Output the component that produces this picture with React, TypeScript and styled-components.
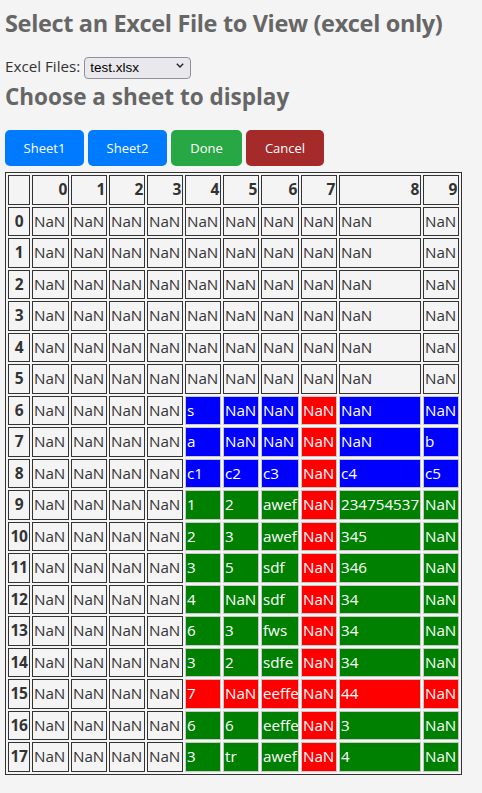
import React from "react";
import styled, { createGlobalStyle } from "styled-components";

const Global = createGlobalStyle`
  html, body { margin: 0; padding: 0; background: #f4f4f4; }
  body { font-family: "Open Sans", "Noto Sans", sans-serif; color: #333; }
`;

const Page = styled.div`
  padding: 0 5px 16px;
  display: flex;
  flex-direction: column;
  align-items: flex-start;
`;

const Title = styled.h1`
  margin: 7px 0 0;
  font-size: 23.5px;
  letter-spacing: -0.35px;
  line-height: 32px;
  font-weight: 700;
  color: #666;
  white-space: nowrap;
`;

const SubTitle = styled.h2`
  margin: 6px 0 0;
  font-size: 22.5px;
  line-height: 28px;
  font-weight: 700;
  color: #666;
  white-space: nowrap;
`;

const FileRow = styled.div`
  margin-top: 16px;
  display: flex;
  align-items: center;
  gap: 4px;
  height: 22px;
`;

const Label = styled.label`
  font-size: 15.2px;
  line-height: 20px;
  color: #333;
`;

const SelectWrap = styled.div`
  position: relative;
  width: 107px;
  height: 22px;
`;

const Select = styled.select`
  appearance: none;
  -webkit-appearance: none;
  box-sizing: border-box;
  width: 100%;
  height: 100%;
  margin: 0;
  padding: 0 20px 0 5px;
  background: #e9e9ed;
  border: 1px solid #8f8f9d;
  border-radius: 4px;
  font-family: "Liberation Sans", Arial, sans-serif;
  font-size: 13.5px;
  color: #000;
`;

const Chevron = styled.svg`
  position: absolute;
  right: 7px;
  top: 8px;
  pointer-events: none;
`;

const Buttons = styled.div`
  margin-top: 19px;
  display: flex;
  gap: 4px;
`;

const Button = styled.button<{ $bg: string; $w: number }>`
  width: ${(p) => p.$w}px;
  height: 36px;
  padding: 0;
  border: none;
  border-radius: 5px;
  background: ${(p) => p.$bg};
  color: #fff;
  font-family: "Open Sans", "Noto Sans", sans-serif;
  font-size: 13px;
  cursor: pointer;
`;

const Table = styled.table`
  margin-top: 6px;
  table-layout: fixed;
  width: 457px;
  border-collapse: separate;
  border-spacing: 2px;
  border: 1px solid #333;
  font-size: 15.2px;
`;

const Col = styled.col<{ $w: number }>`
  width: ${(p) => p.$w}px;
`;

const HeadCell = styled.th<{ $align: "right" | "center" }>`
  box-sizing: border-box;
  height: 29.5px;
  padding: 0 1px;
  border: 1px solid #333;
  font-weight: 700;
  font-size: 15.5px;
  text-align: ${(p) => p.$align};
  line-height: 27.5px;
  color: #333;
  white-space: nowrap;
  overflow: hidden;
  letter-spacing: -0.3px;
`;

const Cell = styled.td<{ $bg?: string }>`
  box-sizing: border-box;
  height: 29.5px;
  padding: 0 1px;
  line-height: 27.5px;
  text-align: left;
  white-space: nowrap;
  overflow: hidden;
  border: 1px solid ${(p) => (p.$bg ? "#c8c8c8" : "#333")};
  background: ${(p) => p.$bg ?? "transparent"};
  color: ${(p) => (p.$bg ? "#fff" : "#333")};
`;

const widths = [22, 37, 36, 36, 36, 36, 36, 38, 36, 82, 36];

const B = "#0000ff";
const R = "#ff0000";
const G = "#008000";

type Row = { values: string[]; colors: (string | undefined)[] };

const nan4 = ["NaN", "NaN", "NaN", "NaN"];
const none4 = [undefined, undefined, undefined, undefined];
const blueRow = [B, B, B, R, B, B];
const greenRow = [G, G, G, R, G, G];
const redRow = [R, R, R, R, R, R];

const colored: [string[], string[]][] = [
  [["s", "NaN", "NaN", "NaN", "NaN", "NaN"], blueRow],
  [["a", "NaN", "NaN", "NaN", "NaN", "b"], blueRow],
  [["c1", "c2", "c3", "NaN", "c4", "c5"], blueRow],
  [["1", "2", "awef", "NaN", "234754537", "NaN"], greenRow],
  [["2", "3", "awef", "NaN", "345", "NaN"], greenRow],
  [["3", "5", "sdf", "NaN", "346", "NaN"], greenRow],
  [["4", "NaN", "sdf", "NaN", "34", "NaN"], greenRow],
  [["6", "3", "fws", "NaN", "34", "NaN"], greenRow],
  [["3", "2", "sdfe", "NaN", "34", "NaN"], greenRow],
  [["7", "NaN", "eeffe", "NaN", "44", "NaN"], redRow],
  [["6", "6", "eeffe", "NaN", "3", "NaN"], greenRow],
  [["3", "tr", "awef", "NaN", "4", "NaN"], greenRow],
];

const rows: Row[] = [
  ...Array.from({ length: 6 }, () => ({
    values: Array(10).fill("NaN"),
    colors: Array(10).fill(undefined),
  })),
  ...colored.map(([v, c]) => ({ values: [...nan4, ...v], colors: [...none4, ...c] })),
];

export default function App() {
  return (
    <Page>
      <Global />
      <Title>Select an Excel File to View (excel only)</Title>
      <FileRow>
        <Label htmlFor="files">Excel Files:</Label>
        <SelectWrap>
          <Select id="files" defaultValue="test.xlsx">
            <option value="test.xlsx">test.xlsx</option>
          </Select>
          <Chevron width="8" height="5" viewBox="0 0 8 5">
            <path d="M0.8 0.8 L4 4 L7.2 0.8" fill="none" stroke="#222" strokeWidth="1.4" />
          </Chevron>
        </SelectWrap>
      </FileRow>
      <SubTitle>Choose a sheet to display</SubTitle>
      <Buttons>
        <Button $bg="#007bff" $w={79}>Sheet1</Button>
        <Button $bg="#007bff" $w={79}>Sheet2</Button>
        <Button $bg="#28a745" $w={71}>Done</Button>
        <Button $bg="#a52a2a" $w={78}>Cancel</Button>
      </Buttons>
      <Table>
        <colgroup>
          {widths.map((w, i) => (
            <Col key={i} $w={w} />
          ))}
        </colgroup>
        <thead>
          <tr>
            <HeadCell $align="right"></HeadCell>
            {Array.from({ length: 10 }, (_, i) => (
              <HeadCell key={i} $align="right">
                {i}
              </HeadCell>
            ))}
          </tr>
        </thead>
        <tbody>
          {rows.map((r, ri) => (
            <tr key={ri}>
              <HeadCell $align="center">{ri}</HeadCell>
              {r.values.map((v, ci) => (
                <Cell key={ci} $bg={r.colors[ci]}>
                  {v}
                </Cell>
              ))}
            </tr>
          ))}
        </tbody>
      </Table>
    </Page>
  );
}
